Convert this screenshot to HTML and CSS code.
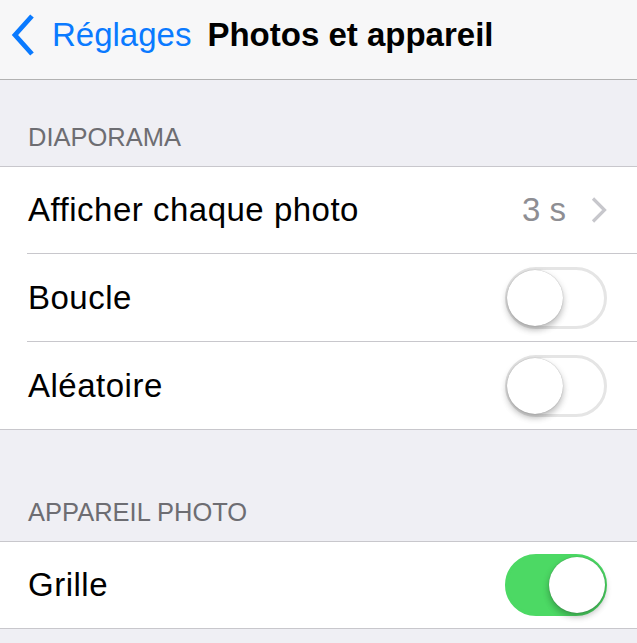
FILE: index.html
```html
<!DOCTYPE html>
<html lang="fr">
<head>
<meta charset="utf-8">
<title>Photos et appareil</title>
<link rel="stylesheet" href="styles.css">
</head>
<body>
  <header class="nav">
    <a class="back">
      <svg class="back-chevron" width="24" height="44" viewBox="0 0 24 44"><path d="M21 3 L4 22 L21 41" fill="none" stroke="#0a7aff" stroke-width="4.8"/></svg>
      <span class="back-label">Réglages</span>
    </a>
    <h1 class="title">Photos et appareil</h1>
  </header>

  <section class="group group-first">
    <h2 class="group-header">DIAPORAMA</h2>
    <ul class="list">
      <li class="row">
        <span class="label">Afficher chaque photo</span>
        <span class="detail">3 s</span>
        <svg class="disclosure" width="16" height="26" viewBox="0 0 16 26"><path d="M2 1.5 L13.5 13 L2 24.5" fill="none" stroke="#c7c7cc" stroke-width="3.2"/></svg>
      </li>
      <li class="row">
        <span class="label">Boucle</span>
        <span class="switch"><span class="knob"></span></span>
      </li>
      <li class="row">
        <span class="label">Aléatoire</span>
        <span class="switch"><span class="knob"></span></span>
      </li>
    </ul>
  </section>

  <section class="group group-second">
    <h2 class="group-header">APPAREIL PHOTO</h2>
    <ul class="list">
      <li class="row">
        <span class="label">Grille</span>
        <span class="switch on"><span class="knob"></span></span>
      </li>
    </ul>
  </section>
</body>
</html>
```

FILE: styles.css
```css
html, body {
  margin: 0;
  padding: 0;
}
body {
  background: #efeff4;
  font-family: "Liberation Sans", Arial, sans-serif;
  color: #000;
  width: 637px;
  height: 643px;
  overflow: hidden;
}
.nav {
  height: 69px;
  padding-bottom: 10px;
  background: #f7f7f8;
  border-bottom: 1px solid #b2b2b2;
  display: flex;
  align-items: center;
  padding-left: 11px;
}
.back {
  display: flex;
  align-items: center;
  color: #0a7aff;
}
.back-chevron {
  display: block;
  margin-right: 17px;
}
.back-label {
  font-size: 33px;
}
.title {
  margin: 0 0 0 16px;
  font-size: 33px;
  font-weight: bold;
}
.group-header {
  margin: 0;
  padding: 0 0 14px 28px;
  font-size: 25.5px;
  line-height: 30px;
  font-weight: normal;
  color: #6d6d72;
}
.group-first .group-header {
  padding-top: 42px;
}
.group-second .group-header {
  padding-top: 67px;
}
.list {
  list-style: none;
  margin: 0;
  padding: 0 0 0 27px;
  background: #fff;
  border-top: 1px solid #c8c7cc;
  border-bottom: 1px solid #c8c7cc;
}
.row {
  height: 87px;
  display: flex;
  align-items: center;
  padding-right: 30px;
  border-top: 1px solid #c8c7cc;
}
.row:first-child {
  height: 86px;
  border-top: none;
}
.label {
  flex: 1;
  font-size: 33px;
  padding-left: 1px;
  letter-spacing: 0.5px;
}
.detail {
  font-size: 33px;
  color: #8e8e93;
  margin-right: 25px;
}
.disclosure {
  display: block;
}
.switch {
  position: relative;
  box-sizing: border-box;
  width: 102px;
  height: 62px;
  border-radius: 31px;
  border: 3px solid #e5e5e5;
  background: #fff;
}
.switch.on {
  background: #4cd964;
  border-color: #4cd964;
}
.knob {
  position: absolute;
  top: 0px;
  left: -1px;
  width: 56px;
  height: 56px;
  border-radius: 50%;
  background: #fff;
  box-shadow: 0 4px 6px rgba(0, 0, 0, 0.22), 0 0 1px rgba(0, 0, 0, 0.35), 0 3px 10px rgba(0, 0, 0, 0.08);
}
.switch.on .knob {
  left: auto;
  right: -1px;
}
```
